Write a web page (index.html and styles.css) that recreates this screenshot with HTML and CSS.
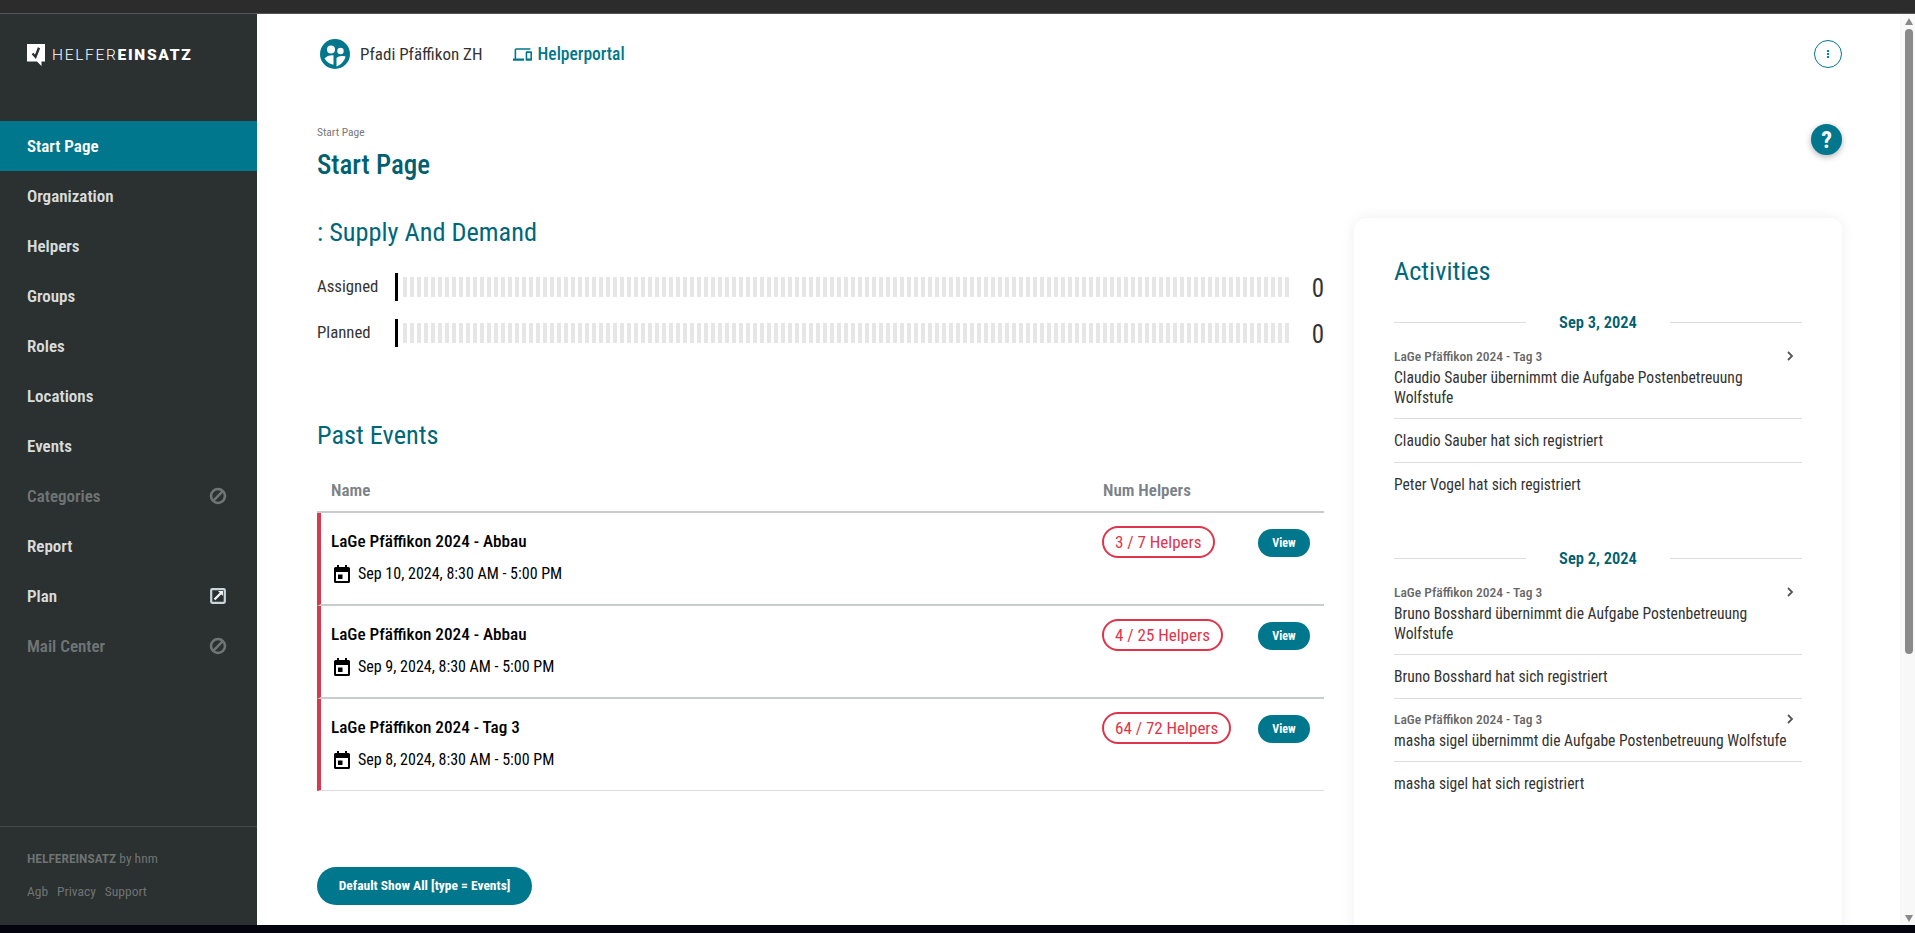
FILE: index.html
```html
<!DOCTYPE html>
<html lang="en">
<head>
<meta charset="utf-8">
<title>Helfereinsatz</title>
<link rel="stylesheet" href="styles.css">
</head>
<body>
<div class="topbar"></div>
<div class="app">
  <aside class="side">
    <div class="brand">
      <svg class="brand-mark" viewBox="0 0 18 22"><path fill="#fff" d="M0 0h18v17.500h-3.500V22L10 17.500H0z"/><path fill="none" stroke="#2b3030" stroke-width="2.400" d="M5.500 9.500l3 3.200 3.500-9"/></svg>
      <span class="brand-name"><span class="brand-thin">HELFER</span><b class="brand-bold">EINSATZ</b></span>
    </div>
    <nav class="nav">
      <a class="nav-item active">Start Page</a>
      <a class="nav-item">Organization</a>
      <a class="nav-item">Helpers</a>
      <a class="nav-item">Groups</a>
      <a class="nav-item">Roles</a>
      <a class="nav-item">Locations</a>
      <a class="nav-item">Events</a>
      <a class="nav-item muted">Categories
        <svg class="nav-icon" viewBox="0 0 18 18"><circle cx="9" cy="9" r="7" fill="none" stroke="currentColor" stroke-width="2.600"/><path stroke="currentColor" stroke-width="2.600" d="M4.200 13.800L13.800 4.200"/></svg>
      </a>
      <a class="nav-item">Report</a>
      <a class="nav-item">Plan
        <svg class="nav-icon" viewBox="0 0 18 18"><rect x="2.200" y="2.200" width="13.600" height="13.600" rx="1" fill="none" stroke="#c8d6dc" stroke-width="2.200"/><path stroke="#eef3f5" stroke-width="2.400" d="M5.500 12.500L12.500 5.500"/><path fill="#eef3f5" d="M9 4h5v5z"/></svg>
      </a>
      <a class="nav-item muted">Mail Center
        <svg class="nav-icon" viewBox="0 0 18 18"><circle cx="9" cy="9" r="7" fill="none" stroke="currentColor" stroke-width="2.600"/><path stroke="currentColor" stroke-width="2.600" d="M4.200 13.800L13.800 4.200"/></svg>
      </a>
    </nav>
    <footer class="side-foot">
      <div class="foot-line"><b class="foot-bold">HELFEREINSATZ</b> by hnm</div>
      <div class="foot-links"><a>Agb</a><a>Privacy</a><a>Support</a></div>
    </footer>
  </aside>

  <main class="main">
    <header class="head">
      <svg class="org-logo" viewBox="0 0 30 30"><circle cx="15" cy="15" r="15" fill="#00778c"/><circle cx="11" cy="10.500" r="4" fill="#fff"/><circle cx="20.500" cy="12" r="3.200" fill="#fff"/><path fill="#fff" d="M4.500 19.500c2-2.500 6-3.700 9-3.200v9.500c-3.500-.5-7-3-9-6.300z"/><path fill="#fff" d="M16.500 19c2.500-2 6-2.500 9-1.500-1 4.500-4.500 8-9 10z"/></svg>
      <span class="org-name">Pfadi Pfäffikon ZH</span>
      <a class="portal">
        <svg class="portal-icon" viewBox="0 0 24 24"><path fill="#00778c" d="M4 6h18V4H4c-1.100 0-2 .9-2 2v11H0v3h14v-3H4V6zm19 2h-6c-.55 0-1 .45-1 1v10c0 .55.45 1 1 1h6c.55 0 1-.45 1-1V9c0-.55-.45-1-1-1zm-1 9h-4v-7h4v7z"/></svg>
        Helperportal
      </a>
      <span class="dots"><i></i><i></i><i></i></span>
    </header>

    <div class="page-title">
      <div>
        <div class="crumb">Start Page</div>
        <h1 class="title">Start Page</h1>
      </div>
      <span class="help">?</span>
    </div>

    <div class="columns">
      <section class="left">
        <h2 class="h2 supply-h">: Supply And Demand</h2>
        <div class="bar-row"><span class="bar-label">Assigned</span><span class="bar-zero"></span><span class="bar-track"></span><span class="bar-num">0</span></div>
        <div class="bar-row"><span class="bar-label">Planned</span><span class="bar-zero"></span><span class="bar-track"></span><span class="bar-num">0</span></div>

        <h2 class="h2 past-h">Past Events</h2>
        <div class="thead"><span class="th-name">Name</span><span class="th-num">Num Helpers</span></div>

        <div class="row">
          <div class="row-main">
            <div class="row-name">LaGe Pfäffikon 2024 - Abbau</div>
            <div class="row-date"><svg class="cal" viewBox="0 0 18 18"><path d="M1 3.500A1.500 1.500 0 0 1 2.500 2H4V0h2v2h6V0h2v2h1.500A1.500 1.500 0 0 1 17 3.500v13a1.500 1.500 0 0 1-1.500 1.500h-13A1.500 1.500 0 0 1 1 16.500zM3 7v9h12V7zm2 2.500h4.500V14H5z"/></svg>Sep 10, 2024, 8:30 AM - 5:00 PM</div>
          </div>
          <div class="row-badge"><span class="badge">3 / 7 Helpers</span></div>
          <a class="view">View</a>
        </div>
        <div class="row">
          <div class="row-main">
            <div class="row-name">LaGe Pfäffikon 2024 - Abbau</div>
            <div class="row-date"><svg class="cal" viewBox="0 0 18 18"><path d="M1 3.500A1.500 1.500 0 0 1 2.500 2H4V0h2v2h6V0h2v2h1.500A1.500 1.500 0 0 1 17 3.500v13a1.500 1.500 0 0 1-1.500 1.500h-13A1.500 1.500 0 0 1 1 16.500zM3 7v9h12V7zm2 2.500h4.500V14H5z"/></svg>Sep 9, 2024, 8:30 AM - 5:00 PM</div>
          </div>
          <div class="row-badge"><span class="badge">4 / 25 Helpers</span></div>
          <a class="view">View</a>
        </div>
        <div class="row last">
          <div class="row-main">
            <div class="row-name">LaGe Pfäffikon 2024 - Tag 3</div>
            <div class="row-date"><svg class="cal" viewBox="0 0 18 18"><path d="M1 3.500A1.500 1.500 0 0 1 2.500 2H4V0h2v2h6V0h2v2h1.500A1.500 1.500 0 0 1 17 3.500v13a1.500 1.500 0 0 1-1.500 1.500h-13A1.500 1.500 0 0 1 1 16.500zM3 7v9h12V7zm2 2.500h4.500V14H5z"/></svg>Sep 8, 2024, 8:30 AM - 5:00 PM</div>
          </div>
          <div class="row-badge"><span class="badge">64 / 72 Helpers</span></div>
          <a class="view">View</a>
        </div>
        <a class="show-all">Default Show All [type = Events]</a>
      </section>

      <aside class="card">
        <h2 class="h2 act-h">Activities</h2>
        <div class="day"><span>Sep 3, 2024</span></div>
        <div class="act">
          <div class="act-sub">LaGe Pfäffikon 2024 - Tag 3<svg class="chev" viewBox="0 0 8 10"><path d="M2 1l4 4-4 4" fill="none" stroke="#555" stroke-width="1.800"/></svg></div>
          <div class="act-text">Claudio Sauber übernimmt die Aufgabe Postenbetreuung Wolfstufe</div>
        </div>
        <div class="act"><div class="act-text">Claudio Sauber hat sich registriert</div></div>
        <div class="act end"><div class="act-text">Peter Vogel hat sich registriert</div></div>

        <div class="day second"><span>Sep 2, 2024</span></div>
        <div class="act">
          <div class="act-sub">LaGe Pfäffikon 2024 - Tag 3<svg class="chev" viewBox="0 0 8 10"><path d="M2 1l4 4-4 4" fill="none" stroke="#555" stroke-width="1.800"/></svg></div>
          <div class="act-text">Bruno Bosshard übernimmt die Aufgabe Postenbetreuung Wolfstufe</div>
        </div>
        <div class="act"><div class="act-text">Bruno Bosshard hat sich registriert</div></div>
        <div class="act tight">
          <div class="act-sub">LaGe Pfäffikon 2024 - Tag 3<svg class="chev" viewBox="0 0 8 10"><path d="M2 1l4 4-4 4" fill="none" stroke="#555" stroke-width="1.800"/></svg></div>
          <div class="act-text">masha sigel übernimmt die Aufgabe Postenbetreuung Wolfstufe</div>
        </div>
        <div class="act end"><div class="act-text">masha sigel hat sich registriert</div></div>
      </aside>
    </div>
  </main>

  <div class="scroll"><span class="arrow up"></span><span class="thumb"></span><span class="arrow down"></span></div>
</div>
<div class="bottombar"></div>
</body>
</html>
```

FILE: styles.css
```css
* { box-sizing: border-box; }
html, body { margin: 0; height: 100%; overflow: hidden; background: #fff; }
body {
  display: flex;
  flex-direction: column;
  font-family: "Roboto Condensed", "Roboto", sans-serif;
  font-stretch: 75%;
  color: #2b3030;
}
a { text-decoration: none; color: inherit; }
h1, h2 { margin: 0; font-weight: 400; }

.topbar { height: 14px; flex: none; background: #2c2c2c; border-bottom: 1px solid #555; }
.bottombar { height: 8px; flex: none; background: #04040e; }
.app { flex: 1; display: flex; min-height: 0; }

/* sidebar */
.side { width: 257px; flex: none; background: #2b3030; display: flex; flex-direction: column; }
.brand { height: 107px; flex: none; padding: 30px 0 0 27px; display: flex; align-items: flex-start; gap: 7px; }
.brand-mark { width: 18px; height: 22px; }
.brand-name { font-family: "Roboto", sans-serif; font-stretch: 100%; font-size: 15.500px; line-height: 22px; color: #fff; letter-spacing: 1.700px; }
.brand-thin { font-weight: 300; }
.brand-bold { font-weight: 900; }
.nav { flex: 1; }
.nav-item { height: 50px; padding: 0 30px 1px 27px; display: flex; align-items: center; justify-content: space-between; font-size: 17px; font-weight: 600; color: #d8dcdc; }
.nav-item.active { background: #00778c; color: #fff; }
.nav-item.muted { color: #6f7474; }
.nav-icon { width: 18px; height: 18px; margin-top: 1px; }
.side-foot { height: 99px; flex: none; border-top: 1px solid #454a4a; padding: 21px 0 0 27px; color: #6f7474; font-size: 13.500px; }
.foot-line { line-height: 20px; }
.foot-bold { font-weight: 600; }
.foot-links { display: flex; gap: 9px; margin-top: 13px; line-height: 20px; }

/* main */
.main { flex: 1; min-width: 0; padding: 0 58px 0 60px; overflow: hidden; }
.head { height: 80px; display: flex; align-items: center; }
.org-logo { width: 30px; height: 30px; margin: 0 10px 0 3px; }
.org-name { font-size: 17px; color: #333; }
.portal { display: flex; align-items: center; gap: 6px; margin-left: 30px; font-size: 17.500px; color: #00778c; font-weight: 500; }
.portal-icon { width: 19px; height: 19px; }
.dots { margin-left: auto; width: 28px; height: 28px; border: 1px solid #00778c; border-radius: 50%; display: flex; flex-direction: column; align-items: center; justify-content: center; gap: 1px; }
.dots i { width: 2px; height: 2px; background: #0089a3; }

.page-title { display: flex; justify-content: space-between; align-items: flex-start; height: 124px; padding-top: 30px; }
.crumb { font-size: 11.500px; line-height: 16px; color: #777; }
.title { font-size: 27px; line-height: 34px; margin-top: 8px; color: #005f70; font-weight: 500; }
.help { width: 31px; height: 31px; border-radius: 50%; background: #00778c; color: #fff; font-size: 24px; font-weight: 700; display: flex; align-items: center; justify-content: center; box-shadow: 0 2px 6px rgba(0,0,0,.3); }

.columns { display: grid; grid-template-columns: 1007px 488px; column-gap: 30px; }
.h2 { font-size: 26.300px; line-height: 36px; color: #00677a; }

.left { padding-bottom: 20px; }
.supply-h { margin-top: -4px; }
.bar-row { display: flex; align-items: center; height: 28px; margin-top: 18px; }
.supply-h + .bar-row { margin-top: 23px; }
.bar-label { width: 78px; font-size: 16.800px; color: #333; padding-bottom: 2px; }
.bar-zero { width: 3px; height: 28px; background: #000; }
.bar-track { width: 890px; height: 20px; margin-left: 5px; background: repeating-linear-gradient(90deg, #e6e6e6 0 4px, transparent 4px 7px); }
.bar-num { margin-left: 21px; font-size: 25px; color: #333; padding-top: 2px; }
.past-h { margin-top: 70px; }

.thead { display: flex; height: 60px; align-items: center; padding: 16px 0 0 14px; border-bottom: 2px solid #c8cccc; font-size: 17px; font-weight: 600; color: #7a8288; }
.th-name { width: 772px; }
.row { display: flex; height: 93px; border-left: 4px solid #d73a50; border-bottom: 2px solid #c8cccc; padding-left: 10px; }
.row.last { height: 92px; border-bottom: 1px solid #ddd; }
.row-main { width: 771px; padding-top: 15px; }
.row-name { font-size: 17.200px; line-height: 26px; font-weight: 500; color: #000; }
.row-date { display: flex; align-items: center; gap: 7px; margin-top: 7px; font-size: 16px; line-height: 26px; color: #000; }
.cal { width: 18px; height: 18px; margin-left: 2px; }
.row-badge { width: 156px; padding-top: 13px; display: flex; align-items: flex-start; }
.badge { height: 32px; line-height: 28px; padding: 0 11px; border: 2px solid #e0344a; border-radius: 16px; font-size: 17px; color: #e0344a; }
.view { width: 52px; height: 28px; margin-top: 16px; border-radius: 14px; background: #00778c; color: #fff; font-size: 12px; font-weight: 700; display: flex; align-items: center; justify-content: center; }
.show-all { display: flex; align-items: center; justify-content: center; width: 215px; height: 38px; margin-top: 76px; padding-bottom: 2px; border-radius: 19px; background: #00778c; color: #fff; font-size: 13.500px; font-weight: 700; }

.card { height: 720px; background: #fff; border-radius: 12px 12px 0 0; padding: 35px 40px 0; box-shadow: 0 0 14px rgba(0,0,0,.07); }
.act-h { line-height: 36px; }
.day { display: flex; align-items: center; gap: 33px; margin-top: 22px; height: 22px; font-size: 16.500px; font-weight: 600; color: #005f70; }
.day::before, .day::after { content: ""; flex: 1; height: 1px; background: #ddd; }
.day.second { margin-top: 41px; }
.act { border-bottom: 1px solid #ddd; padding: 10px 0 11px; }
.act.end { border-bottom: 0; }
.act-sub { display: flex; justify-content: space-between; align-items: center; font-size: 13.500px; line-height: 20px; color: #666; font-weight: 500; padding-right: 8px; margin: 3px 0 1px; }
.chev { width: 8px; height: 10px; }
.act-text { font-size: 15.600px; line-height: 20px; color: #333; margin-top: 2px; }
.act-sub + .act-text { margin-bottom: -1px; }
.act.tight { padding-bottom: 11px; }
.act.tight .act-sub { margin: 0 0 2px; }

/* scrollbar */
.scroll { width: 15px; flex: none; background: #f8f8f8; display: flex; flex-direction: column; align-items: center; padding: 4px 0 3px 3px; }
.thumb { width: 8px; height: 625px; margin-top: 4px; background: #8a8a8a; border-radius: 4px; }
.arrow { width: 0; height: 0; border-left: 4px solid transparent; border-right: 4px solid transparent; }
.arrow.up { border-bottom: 7px solid #8a8a8a; }
.arrow.down { margin-top: auto; border-top: 7px solid #8a8a8a; }
```
